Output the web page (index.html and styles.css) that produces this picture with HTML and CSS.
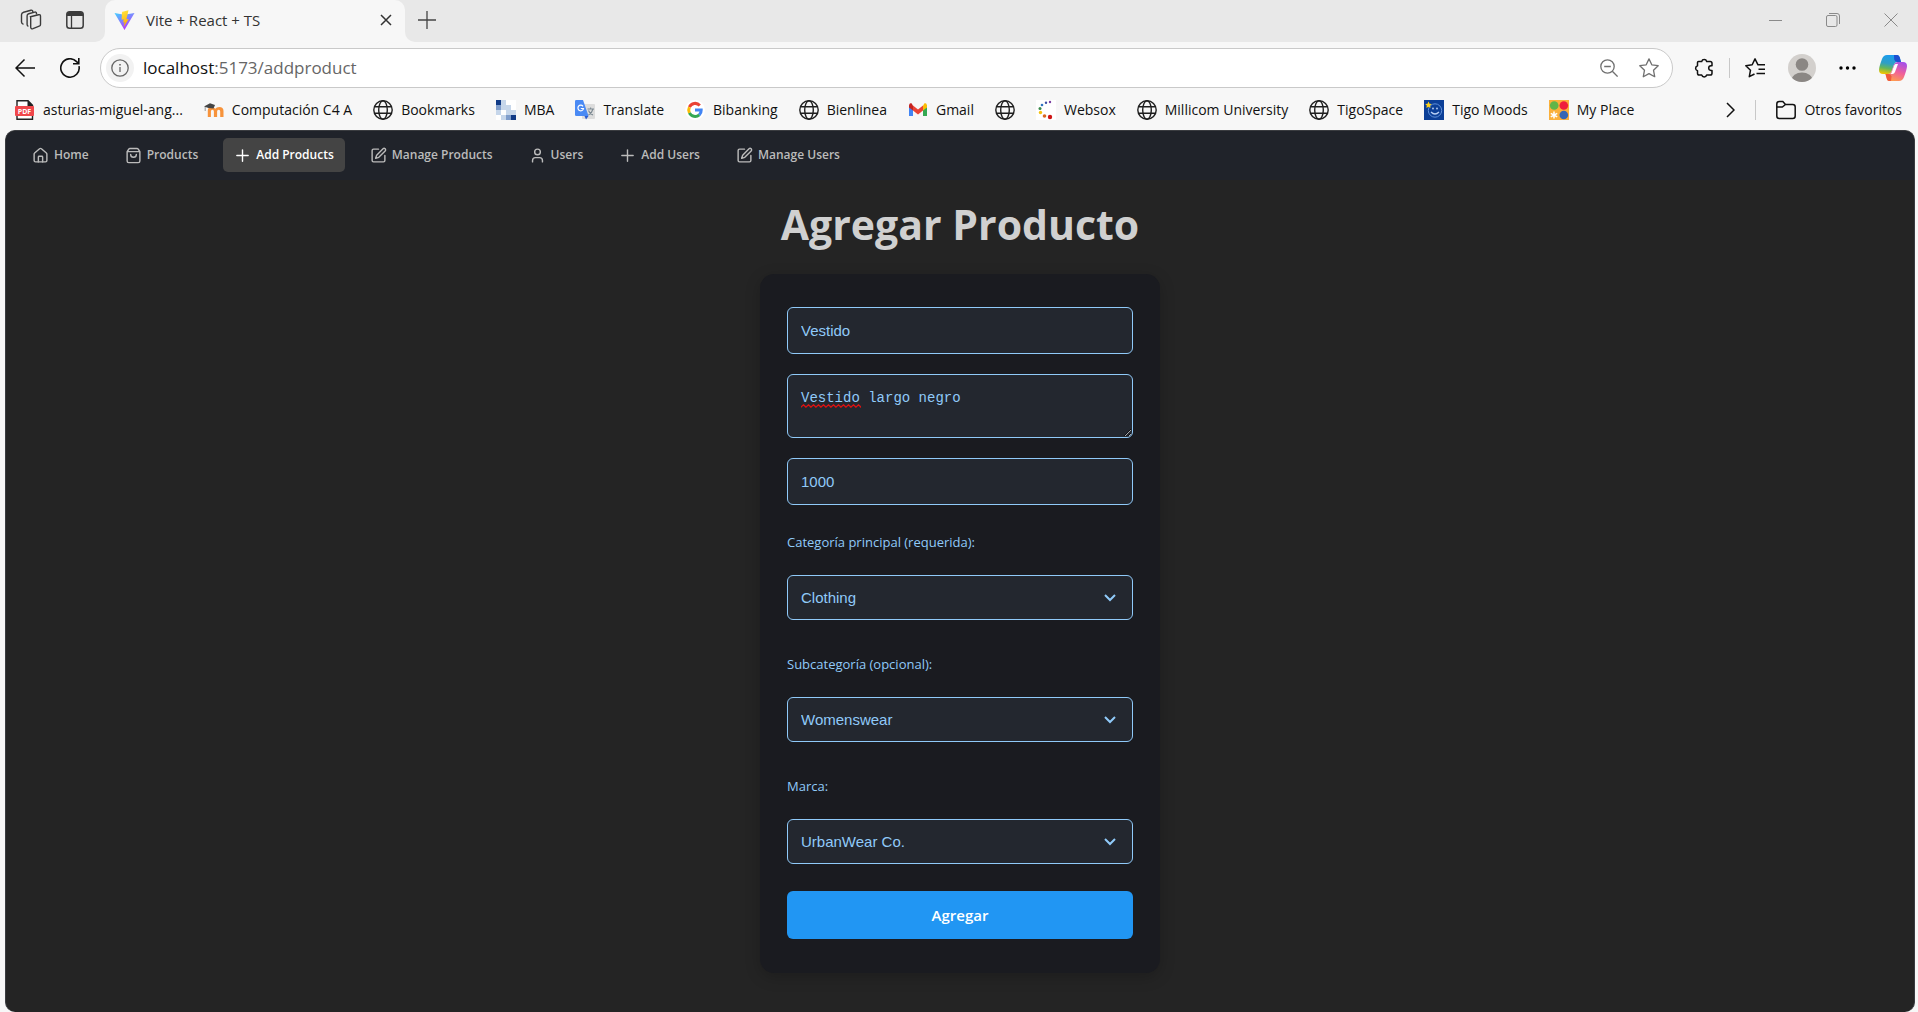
FILE: index.html
```html
<!DOCTYPE html>
<html lang="es">
<head>
<meta charset="utf-8">
<meta name="viewport" content="width=device-width, initial-scale=1">
<title>Vite + React + TS</title>
<link rel="stylesheet" href="styles.css">
</head>
<body>
<svg class="sprite" aria-hidden="true">
  <symbol id="globe" viewBox="0 0 20 20"><g fill="none" stroke="#1f1f1f" stroke-width="1.4"><circle cx="10" cy="10" r="9.2"/><ellipse cx="10" cy="10" rx="4.3" ry="9.2"/><path d="M1.5 6.8h17M1.5 13.2h17"/></g></symbol>
  <symbol id="edit" viewBox="0 0 24 24"><path d="M12 3H5a2 2 0 0 0-2 2v14a2 2 0 0 0 2 2h14a2 2 0 0 0 2-2v-7"/><path d="M18.4 2.6a2.1 2.1 0 0 1 3 3L12.4 14.6 8 16l1.400-4.400z"/></symbol>
  <symbol id="plus" viewBox="0 0 24 24"><path d="M4 12h16M12 4v16"/></symbol>
  <symbol id="chevron" viewBox="0 0 12 8"><path d="M1 1l5 5 5-5" fill="none" stroke="currentColor" stroke-width="2"/></symbol>
</svg>

<header class="browser">
  <div class="tabs">
    <div class="tabs-start">
      <button class="chrome-btn" aria-label="Áreas de trabajo"><svg width="22" height="22" viewBox="0 0 22 22" fill="none" stroke="#3b3b3b" stroke-width="1.400"><path d="M10.500 7.800l8-2.100q2-.4 2 1.500v8.300q0 1.300-1.300 1.700l-6.200 2.500q-2 .6-2.300-1.300V9.500q0-1.300-.2-1.700z"/><path d="M16.500 5.500V4.300q-.2-1.500-1.800-1.200l-6 1.600q-1.600.4-1.600 2v8.800q0 1.400 1.300 1.900"/><path d="M12.800 3V2.200q-.4-1.400-1.900-1L3.600 3.200Q1.500 3.800 1.500 5.800v7.300q0 1.700 2 2.300"/></svg></button>
      <button class="chrome-btn" aria-label="Acciones de pestaña"><svg width="18" height="18" viewBox="0 0 18 18"><rect x=".8" y=".8" width="16.400" height="16.400" rx="2.800" fill="none" stroke="#3b3b3b" stroke-width="1.500"/><path d="M1 5V3.500Q1 1 3.500 1h11Q17 1 17 3.500V5z" fill="#3b3b3b"/><path d="M5.500 5v12" stroke="#3b3b3b" stroke-width="1.300"/></svg></button>
    </div>
    <div class="tab-slot">
      <div class="tab">
        <svg width="21" height="20" viewBox="0 0 21 20"><defs><linearGradient id="va" x1="0" y1="0" x2=".6" y2="1"><stop offset="0" stop-color="#41d1ff"/><stop offset="1" stop-color="#bd34fe"/></linearGradient><linearGradient id="vb" x1=".4" y1="0" x2=".6" y2="1"><stop offset="0" stop-color="#ffea83"/><stop offset=".1" stop-color="#ffdd35"/><stop offset="1" stop-color="#ffa800"/></linearGradient></defs><path d="M.5 3l9.700 1.800L20.500 3 10.500 20z" fill="url(#va)"/><path d="M14.500.3L8 1.700l-.4 8 2.200-.4-.7 3.300 1.600-.5-1 5 5-8.200-2.300.4z" fill="url(#vb)"/></svg>
        <span class="tab-title">Vite + React + TS</span>
        <button class="chrome-btn" aria-label="Cerrar pestaña"><svg width="12" height="12" viewBox="0 0 12 12"><path d="M1 1l10 10M11 1L1 11" stroke="#333" stroke-width="1.500"/></svg></button>
      </div>
    </div>
    <div class="tabs-end">
      <button class="chrome-btn" aria-label="Nueva pestaña"><svg width="18" height="18" viewBox="0 0 18 18"><path d="M0 9h18M9 0v18" stroke="#444" stroke-width="1.300"/></svg></button>
      <div class="window-buttons">
        <button class="chrome-btn" aria-label="Minimizar"><svg width="13" height="13" viewBox="0 0 13 13"><path d="M0 6.500h13" stroke="#8a8a8a"/></svg></button>
        <button class="chrome-btn" aria-label="Restaurar"><svg width="14" height="14" viewBox="0 0 14 14" fill="none" stroke="#8a8a8a"><rect x=".5" y="2.500" width="10.500" height="11" rx="1.500"/><path d="M3 .5h8q2.500 0 2.500 2.500v8"/></svg></button>
        <button class="chrome-btn" aria-label="Cerrar"><svg width="14" height="14" viewBox="0 0 14 14"><path d="M.5.5l13 13M13.500.5l-13 13" stroke="#8a8a8a"/></svg></button>
      </div>
    </div>
  </div>

  <div class="toolbar">
    <button class="chrome-btn" aria-label="Atrás"><svg width="20" height="20" viewBox="0 0 20 20" fill="none" stroke="#111" stroke-width="1.500"><path d="M20 10H1M9.500 1.500L1 10l8.500 8.500"/></svg></button>
    <button class="chrome-btn" aria-label="Actualizar"><svg width="20" height="20" viewBox="0 0 20 20" fill="none" stroke="#111" stroke-width="1.600"><path d="M19 8.200A9.200 9.200 0 1 1 16.600 3.600L18.500 5.500M18.800 0v5.800H13"/></svg></button>
    <div class="address">
      <span class="site-info"><svg width="18" height="18" viewBox="0 0 18 18" fill="none" stroke="#666" stroke-width="1.300"><circle cx="9" cy="9" r="8.200"/><path d="M9 8v5"/><path d="M9 5v1.600" stroke-width="1.600"/></svg></span>
      <div class="url" role="textbox" aria-label="Dirección" contenteditable="true" spellcheck="false"><b>localhost</b>:5173/addproduct</div>
      <button class="chrome-btn" aria-label="Alejar"><svg width="18" height="18" viewBox="0 0 18 18" fill="none" stroke="#707070" stroke-width="1.300"><circle cx="7.500" cy="7.500" r="6.700"/><path d="M12.300 12.300l5.300 5.300M4.200 7.500h6.600"/></svg></button>
      <button class="chrome-btn" aria-label="Agregar a favoritos"><svg width="20" height="20" viewBox="0 0 20 20" fill="none" stroke="#707070" stroke-width="1.300" stroke-linejoin="round"><path d="M10 .9l2.800 5.900 6.400.9-4.700 4.500 1.200 6.500L10 15.600l-5.700 3.100 1.200-6.500L.8 7.700l6.400-.9z"/></svg></button>
    </div>
    <div class="tools">
      <button class="chrome-btn" aria-label="Extensiones"><svg width="20" height="20" viewBox="0 0 20 20" fill="none" stroke="#111" stroke-width="1.500" stroke-linejoin="round"><path d="M4.500 3.500h3.200a2.600 2.600 0 0 1 5 0h3.500q1.800 0 1.800 1.800v2.500h-1a2.300 2.300 0 0 0 0 4.600h1v2.800q0 1.800-1.800 1.800h-3.500a2.600 2.600 0 0 1-5 0H5.300q-1.800 0-1.800-1.800v-2.500a2.600 2.600 0 0 1 0-5V4.500q0-1 1-1z"/></svg></button>
      <span class="divider"></span>
      <button class="chrome-btn" aria-label="Favoritos"><svg width="20" height="20" viewBox="0 0 20 20" fill="none" stroke="#111" stroke-width="1.500" stroke-linejoin="round"><path d="M13.500 6.800H13L10 .9 7.200 6.800l-6.400.9 4.700 4.500-1.200 6.500L9.500 16M12.800 6.800H20M13.500 11.300H20M11.500 15.500H20"/></svg></button>
      <button class="chrome-btn" aria-label="Perfil"><svg width="28" height="28" viewBox="0 0 28 28"><defs><clipPath id="av"><circle cx="14" cy="14" r="14"/></clipPath></defs><g clip-path="url(#av)"><path fill="#d3d0cd" d="M0 0h28v28H0z"/><circle cx="14" cy="10.500" r="6.300" fill="#8b8784"/><ellipse cx="14" cy="26" rx="10.500" ry="7.500" fill="#8b8784"/></g></svg></button>
      <button class="chrome-btn" aria-label="Configuración y más"><svg width="17" height="4" viewBox="0 0 17 4"><circle cx="2" cy="2" r="1.700"/><circle cx="8.500" cy="2" r="1.700"/><circle cx="15" cy="2" r="1.700"/></svg></button>
      <button class="chrome-btn" aria-label="Copilot"><svg width="28" height="26" viewBox="0 0 28 26"><defs><linearGradient id="ca" x1=".5" y1="0" x2=".3" y2="1"><stop offset="0" stop-color="#1a9cf0"/><stop offset=".45" stop-color="#2f9fc4"/><stop offset=".7" stop-color="#63b65c"/><stop offset="1" stop-color="#f2c600"/></linearGradient><linearGradient id="cb" x1=".7" y1="0" x2=".3" y2="1"><stop offset="0" stop-color="#a650e8"/><stop offset=".5" stop-color="#f0609a"/><stop offset="1" stop-color="#ffa04a"/></linearGradient></defs><path d="M8 0h10q2 0 2.800 2.500L22 7h-4q-2 0-3 2.500l-2.500 7Q11.500 19 9 19H4q-4 0-4-4 0-3 3-11Q4.500 0 8 0z" fill="url(#ca)"/><path d="M15 0h3.500q1.800 0 2.300 2.500L22 7h-3.500q-2.500 0-3.300-2.500z" fill="#1d4fd0"/><path d="M20 26H10q-1.500 0-2-2L6.500 19H9q2.500 0 3.500-2.500l2.500-7Q16 7 18.500 7H24q4 0 4 4 0 3-3 11-1.500 4-5 4z" fill="url(#cb)"/><path d="M12 26h-2q-1.500 0-2.200-2L6.500 19H10q2 0 2.500 2.500z" fill="#f05a3c"/><path d="M16.500 9h2.500l-3 8q-.8 2-2.500 2h-2q1-1 1.500-2.500l2-5.500q.5-1.500 1.500-2z" fill="#fff"/></svg></button>
    </div>
  </div>

  <nav class="bookmarks" aria-label="Favoritos">
    <a href="#"><svg viewBox="0 0 20 20"><path d="M2 .7h11l4.500 4.500v14.100H2z" fill="#fff" stroke="#222" stroke-width="1.400"/><path d="M12.500 0v6h5.500z" fill="#222"/><rect y="6" width="19" height="10" rx="1" fill="#f0474b"/><text x="9.500" y="13.500" text-anchor="middle" class="pdf-text">PDF</text></svg>asturias-miguel-ang...</a>
    <a href="#"><svg viewBox="0 0 20 20"><path d="M3.800 17V10.500q0-3.500 3.700-3.500 2.600 0 3.800 1.700Q12.500 7 15.200 7 19.500 7 19.500 11v6h-3.300v-5.500q0-1.800-1.500-1.800-1.600 0-1.600 1.800V17H9.900v-5.500q0-1.800-1.500-1.800-1.500 0-1.500 1.800V17z" fill="#f7933b"/><path d="M0 6.500L6 3.300 11 5 9.500 8.500 4.500 8z" fill="#444"/><path d="M1.200 7v4" stroke="#999"/></svg>Computación C4 A</a>
    <a href="#"><svg><use href="#globe"/></svg>Bookmarks</a>
    <a href="#"><svg viewBox="0 0 20 20"><path fill="#fff" d="M0 0h20v20H0z"/><path fill="#c6d6ea" d="M5 0h5v5H5zM5 5h5v5H5zM10 5h5v5h-5zM0 10h5v5H0zM10 10h5v5h-5zM15 10h5v5h-5zM5 15h5v5H5z"/><path fill="#7f9dcb" d="M0 5h5v5H0zM10 15h5v5h-5z"/><path fill="#103a86" d="M0 0h5v5H0zM15 15h5v5h-5z"/></svg>MBA</a>
    <a href="#"><svg viewBox="0 0 20 20"><rect x="7" y="4" width="13" height="15" rx="1" fill="#dcdcdc"/><path d="M1.300 0H8l5.500 16H1.300Q0 16 0 14.700V1.300Q0 0 1.300 0z" fill="#4a8af4"/><path d="M9.500 16h4l-2.500 3.500z" fill="#2a5bd0"/><path d="M8 6.300A2.800 2.800 0 1 0 8.500 8.500H5.800" fill="none" stroke="#fff" stroke-width="1.200"/><path d="M12.500 9H19M15.600 7.500V9M18 9q-1 4-4.500 6M13.500 10.500q1 3 4.500 4.500" fill="none" stroke="#7d8a93" stroke-width="1.100"/></svg>Translate</a>
    <a href="#"><svg viewBox="0 0 20 20"><circle cx="10" cy="10" r="10" fill="#fff"/><g fill="none" stroke-width="3"><path d="M14.800 5.400A6.300 6.300 0 0 0 4.400 7.200" stroke="#ea4335"/><path d="M4.400 7.200a6.300 6.300 0 0 0 0 5.700" stroke="#fbbc05"/><path d="M4.400 12.900a6.300 6.300 0 0 0 9.900 1.900" stroke="#34a853"/><path d="M14.300 14.800A6.300 6.300 0 0 0 16.200 10H10" stroke="#4285f4"/></g></svg>Bibanking</a>
    <a href="#"><svg><use href="#globe"/></svg>Bienlinea</a>
    <a href="#"><svg viewBox="0 0 20 20"><path d="M1 5v11h4V8z" fill="#4285f4"/><path d="M19 5v11h-4V8z" fill="#34a853"/><path d="M5 5.500l5 4 5-4v5l-5 4-5-4z" fill="#ea4335"/><path d="M1 5.500Q1 3 3.200 3L5 5.500v5L1 7.500z" fill="#c5221f"/><path d="M19 5.500Q19 3 16.800 3L15 5.500v5l4-3z" fill="#fbbc04"/></svg>Gmail</a>
    <a href="#" aria-label="Sitio web"><svg><use href="#globe"/></svg></a>
    <a href="#"><svg viewBox="0 0 20 20"><path fill="#fff" d="M0 0h20v20H0z"/><circle cx="14" cy="2" r="1.200" fill="#7a3fa0"/><circle cx="10" cy="2.800" r="1.200" fill="#3c4fa5"/><circle cx="6" cy="5" r="1.300" fill="#2f74c0"/><circle cx="4" cy="8.500" r="1.500" fill="#3a8a4a"/><circle cx="4.500" cy="12.500" r="1.700" fill="#f4c20d"/><circle cx="8.500" cy="16" r="1.800" fill="#d9661f"/><circle cx="14" cy="17" r="2.200" fill="#cf1515"/></svg>Websox</a>
    <a href="#"><svg><use href="#globe"/></svg>Millicom University</a>
    <a href="#"><svg><use href="#globe"/></svg>TigoSpace</a>
    <a href="#"><svg viewBox="0 0 20 20"><path fill="#0c3f97" d="M0 0h20v20H0z"/><circle cx="11" cy="10.500" r="6.700" fill="none" stroke="#5f8fd8"/><path d="M7 12q4 4 8 0" fill="none" stroke="#b9d0f5" stroke-width="1.200"/><circle cx="9" cy="8.500" r=".9" fill="#b9d0f5"/><circle cx="13" cy="8.500" r=".9" fill="#b9d0f5"/><path d="M4.500 1.500l1 2.200 2.300.3-1.700 1.600.4 2.400-2-1.200L2.400 8l.4-2.400L1.200 4l2.300-.3z" fill="#ffd21c"/></svg>Tigo Moods</a>
    <a href="#"><svg viewBox="0 0 20 20"><path fill="#fbb03b" d="M0 0h20v20H0z"/><circle cx="5.200" cy="5.500" r="4.300" fill="#5fb548"/><circle cx="14.800" cy="5.500" r="4.300" fill="#ef1c3c"/><circle cx="14.800" cy="15" r="4.300" fill="#3566b5"/><path d="M5 11.500v7M1.800 13.300l6.400 3.600M8.200 13.300l-6.400 3.600" stroke="#fff" stroke-width="1.500"/></svg>My Place</a>
    <div class="bookmarks-end">
      <button class="chrome-btn" aria-label="Más favoritos"><svg class="more-icon" viewBox="0 0 9 16"><path d="M1 1l7 7-7 7" fill="none" stroke="#111" stroke-width="1.500"/></svg></button>
      <span class="divider"></span>
      <a href="#"><svg viewBox="0 0 20 20" fill="none" stroke="#111" stroke-width="1.500"><path d="M.8 4q0-2.500 2.500-2.500h3.500l2.700 3h7.200q2.500 0 2.500 2.500v9q0 2.500-2.500 2.500H3.300Q.8 18.500.8 16zM.8 7h5.500l3.200-2.500"/></svg>Otros favoritos</a>
    </div>
  </nav>
</header>

<div class="page">
  <nav class="navbar" aria-label="Principal">
    <a href="#"><svg viewBox="0 0 24 24"><path d="M15 21v-7a1 1 0 0 0-1-1h-4a1 1 0 0 0-1 1v7"/><path d="M3 10a2 2 0 0 1 .7-1.500l7-6a2 2 0 0 1 2.600 0l7 6A2 2 0 0 1 21 10v9a2 2 0 0 1-2 2H5a2 2 0 0 1-2-2z"/></svg>Home</a>
    <a href="#"><svg viewBox="0 0 24 24"><path d="M3 6.500v13.200Q3 22 5.300 22h13.400Q21 22 21 19.700V6.500zL5.500 2.800Q6 2 7 2h10q1 0 1.500.8L21 6.500M16 10.500a4 4 0 0 1-8 0"/></svg>Products</a>
    <a href="#" class="active" aria-current="page"><svg><use href="#plus"/></svg>Add Products</a>
    <a href="#"><svg><use href="#edit"/></svg>Manage Products</a>
    <a href="#"><svg viewBox="0 0 24 24"><circle cx="12" cy="7" r="4"/><path d="M5 21v-2q0-4 4-4h6q4 0 4 4v2"/></svg>Users</a>
    <a href="#"><svg><use href="#plus"/></svg>Add Users</a>
    <a href="#"><svg><use href="#edit"/></svg>Manage Users</a>
  </nav>

  <main class="content">
    <h1>Agregar Producto</h1>
    <form class="card">
      <input class="control" type="text" aria-label="Nombre" value="Vestido">
      <div class="textarea-wrap">
        <textarea class="control" aria-label="Descripción" rows="2" spellcheck="false">Vestido largo negro</textarea>
        <svg class="spelling" width="60" height="4" aria-hidden="true"><defs><pattern id="wave" width="5" height="4" patternUnits="userSpaceOnUse"><path d="M-1 4.200L0 3.200 2.500.8 5 3.200 6 4.200" fill="none" stroke="#e01010" stroke-width="1.200"/></pattern></defs><rect width="60" height="4" fill="url(#wave)"/></svg>
      </div>
      <input class="control" type="text" inputmode="numeric" aria-label="Precio" value="1000">
      <div class="field">
        <label for="category">Categoría principal (requerida):</label>
        <div class="select-wrap"><select class="control" id="category"><option>Clothing</option></select><svg><use href="#chevron"/></svg></div>
      </div>
      <div class="field">
        <label for="subcategory">Subcategoría (opcional):</label>
        <div class="select-wrap"><select class="control" id="subcategory"><option>Womenswear</option></select><svg><use href="#chevron"/></svg></div>
      </div>
      <div class="field">
        <label for="brand">Marca:</label>
        <div class="select-wrap"><select class="control" id="brand"><option>UrbanWear Co.</option></select><svg><use href="#chevron"/></svg></div>
      </div>
      <button class="submit" type="button">Agregar</button>
    </form>
  </main>
</div>
</body>
</html>
```
FILE: styles.css
```css
* { box-sizing: border-box; }

body {
  margin: 0;
  min-height: 100vh;
  display: flex;
  flex-direction: column;
  background: #f7f7f7;
  font-family: "Open Sans", "Noto Sans", sans-serif;
  font-size: 14px;
  line-height: 20px;
  color: #111;
}

a { color: inherit; text-decoration: none; }
svg { display: block; flex: none; }
.sprite { display: none; }

/* Browser window */
.chrome-btn {
  display: flex;
  align-items: center;
  justify-content: center;
  padding: 0;
  border: 0;
  background: none;
}

.divider { width: 1px; height: 20px; background: #c8c8c8; }

.tabs { display: flex; height: 42px; }

.tabs-start {
  display: flex;
  align-items: center;
  gap: 24px;
  width: 105px;
  padding: 0 0 2px 20px;
  background: #e8e8e8;
  border-bottom-right-radius: 10px;
}

.tab-slot { width: 300px; background: #e8e8e8; }

.tab {
  display: flex;
  align-items: center;
  height: 100%;
  padding: 0 13px 2px 9px;
  background: #f7f7f7;
  border-radius: 10px 10px 0 0;
}

.tab-title { flex: 1; padding-left: 11px; font-size: 15px; color: #333; }

.tabs-end {
  flex: 1;
  display: flex;
  align-items: center;
  justify-content: space-between;
  padding: 0 20px 2px 13px;
  background: #e8e8e8;
  border-bottom-left-radius: 10px;
}

.window-buttons { display: flex; gap: 44px; }

.toolbar {
  display: flex;
  align-items: center;
  padding: 6px 11px 6px 15px;
}
.toolbar > .chrome-btn { margin-right: 25px; }
.toolbar > .chrome-btn + .chrome-btn { margin-right: 20px; }

.address {
  flex: 1;
  display: flex;
  align-items: center;
  height: 40px;
  padding: 0 13px 0 5px;
  background: #fff;
  border: 1px solid #c9c9c9;
  border-radius: 20px;
}
.address .chrome-btn { margin-left: 21px; }

.site-info {
  display: grid;
  place-items: center;
  width: 28px;
  height: 28px;
  border-radius: 50%;
  background: #f2f2f2;
}

.url {
  flex: 1;
  padding-left: 9px;
  font-size: 17px;
  line-height: 24px;
  color: #666;
  outline: 0;
}
.url b { font-weight: 400; color: #111; }

.tools { display: flex; align-items: center; padding-left: 21px; }
.tools .divider { margin: 0 15px; }
.tools .chrome-btn + .chrome-btn { margin-left: 23px; }

.bookmarks {
  display: flex;
  align-items: center;
  gap: 21px;
  height: 36px;
  padding: 0 16px 4px 15px;
  white-space: nowrap;
}
.bookmarks a { display: flex; align-items: center; gap: 8px; }
.bookmarks svg { width: 20px; height: 20px; }
.bookmarks .more-icon { width: 9px; height: 16px; }
.pdf-text { font: 700 7px "Open Sans", sans-serif; fill: #fff; }

.bookmarks-end {
  display: flex;
  align-items: center;
  gap: 20px;
  margin-left: auto;
}

/* Application */
.page {
  flex: 1;
  margin: 0 3px 0 5px;
  background: #242424;
  border: 1px solid #3a3c40;
  border-bottom: 0;
  border-radius: 10px;
  overflow: hidden;
}

.navbar {
  display: flex;
  gap: 14px;
  padding: 7px 15px 8px;
  background: #20232a;
}

.navbar a {
  display: flex;
  align-items: center;
  gap: 5px;
  height: 34px;
  padding: 0 11px;
  border-radius: 5px;
  font-size: 12px;
  font-weight: 600;
  color: #bbb;
}
.navbar a.active { background: #444; color: #fff; }

.navbar svg {
  width: 17px;
  height: 17px;
  fill: none;
  stroke: currentColor;
  stroke-width: 2;
  stroke-linecap: round;
  stroke-linejoin: round;
}

.content {
  display: flex;
  flex-direction: column;
  align-items: center;
  padding: 19px 16px 38px;
}

h1 {
  margin: 0 0 25px;
  font-size: 41px;
  line-height: 50px;
  font-weight: 700;
  color: #d0d0d0;
}

.card {
  display: flex;
  flex-direction: column;
  gap: 20px;
  width: 100%;
  max-width: 400px;
  padding: 33px 27px 34px;
  background: #1a1b20;
  border-radius: 14px;
  box-shadow: 0 4px 16px rgba(0, 0, 0, .2);
}

.control {
  display: block;
  width: 100%;
  height: 47px;
  margin: 0;
  padding: 0 13px;
  background: #23272f;
  border: 1px solid #90caf9;
  border-radius: 6px;
  font-family: "Liberation Sans", Arial, sans-serif;
  font-size: 15px;
  color: #90caf9;
  outline: 0;
}

.textarea-wrap { position: relative; }

textarea.control {
  height: 64px;
  padding: 14px 13px;
  font-family: "Liberation Mono", monospace;
  font-size: 14px;
  line-height: 18px;
}

.spelling { position: absolute; left: 14px; top: 30px; }

.field { padding: 7px 0; }

.field label {
  display: block;
  margin-bottom: 23px;
  font-size: 13px;
  color: #90caf9;
}

.select-wrap { display: grid; align-items: center; color: #90caf9; }
.select-wrap > * { grid-area: 1 / 1; }
.select-wrap select { height: 45px; appearance: none; }
.select-wrap svg {
  justify-self: end;
  width: 12px;
  height: 8px;
  margin-right: 17px;
  pointer-events: none;
}

.submit {
  height: 48px;
  border: 0;
  border-radius: 6px;
  background: #2196f3;
  font-family: inherit;
  font-size: 15px;
  font-weight: 600;
  color: #fff;
}
```
